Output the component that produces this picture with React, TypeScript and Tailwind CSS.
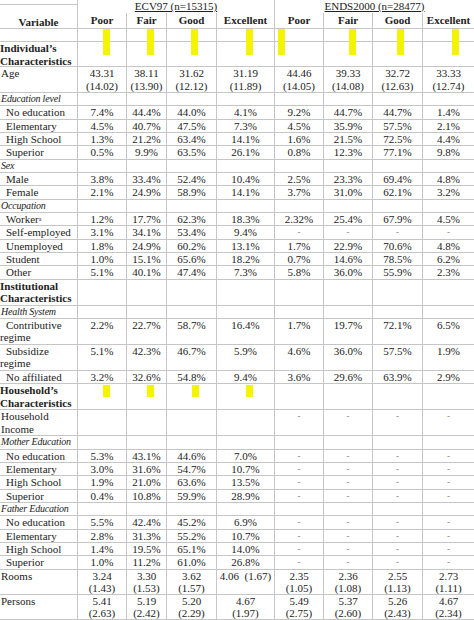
import React from "react";

// column widths: Variable | ECV97 x4 | ENDS2000 x4
const W = [
  "w-[78px]",
  "w-[49px]",
  "w-[40px]",
  "w-[50px]",
  "w-[58px]",
  "w-[49px]",
  "w-[49px]",
  "w-[50px]",
  "w-[51px]",
];

type Kind = "group" | "section" | "item" | "plain";

interface Row {
  label: string;
  kind: Kind;
  h: string;
  cells?: string[];
  sup?: string;
}

const D = ["-", "-", "-", "-"];

const rows: Row[] = [
  { label: "", kind: "plain", h: "h-[13px]" },
  { label: "Individual’s Characteristics", kind: "group", h: "h-[25px]" },
  {
    label: "Age",
    kind: "plain",
    h: "h-[26px]",
    cells: [
      "43.31\n(14.02)",
      "38.11\n(13.90)",
      "31.62\n(12.12)",
      "31.19\n(11.89)",
      "44.46\n(14.05)",
      "39.33\n(14.08)",
      "32.72\n(12.63)",
      "33.33\n(12.74)",
    ],
  },
  { label: "Education level", kind: "section", h: "h-[13.33px]" },
  { label: "No education", kind: "item", h: "h-[13.33px]", cells: ["7.4%", "44.4%", "44.0%", "4.1%", "9.2%", "44.7%", "44.7%", "1.4%"] },
  { label: "Elementary", kind: "item", h: "h-[13.33px]", cells: ["4.5%", "40.7%", "47.5%", "7.3%", "4.5%", "35.9%", "57.5%", "2.1%"] },
  { label: "High School", kind: "item", h: "h-[13.33px]", cells: ["1.3%", "21.2%", "63.4%", "14.1%", "1.6%", "21.5%", "72.5%", "4.4%"] },
  { label: "Superior", kind: "item", h: "h-[13.33px]", cells: ["0.5%", "9.9%", "63.5%", "26.1%", "0.8%", "12.3%", "77.1%", "9.8%"] },
  { label: "Sex", kind: "section", h: "h-[13.33px]" },
  { label: "Male", kind: "item", h: "h-[13.33px]", cells: ["3.8%", "33.4%", "52.4%", "10.4%", "2.5%", "23.3%", "69.4%", "4.8%"] },
  { label: "Female", kind: "item", h: "h-[13.33px]", cells: ["2.1%", "24.9%", "58.9%", "14.1%", "3.7%", "31.0%", "62.1%", "3.2%"] },
  { label: "Occupation", kind: "section", h: "h-[13.33px]" },
  { label: "Worker", sup: "a", kind: "item", h: "h-[13.33px]", cells: ["1.2%", "17.7%", "62.3%", "18.3%", "2.32%", "25.4%", "67.9%", "4.5%"] },
  { label: "Self-employed", kind: "item", h: "h-[13.33px]", cells: ["3.1%", "34.1%", "53.4%", "9.4%", ...D] },
  { label: "Unemployed", kind: "item", h: "h-[13.33px]", cells: ["1.8%", "24.9%", "60.2%", "13.1%", "1.7%", "22.9%", "70.6%", "4.8%"] },
  { label: "Student", kind: "item", h: "h-[13.33px]", cells: ["1.0%", "15.1%", "65.6%", "18.2%", "0.7%", "14.6%", "78.5%", "6.2%"] },
  { label: "Other", kind: "item", h: "h-[13.33px]", cells: ["5.1%", "40.1%", "47.4%", "7.3%", "5.8%", "36.0%", "55.9%", "2.3%"] },
  { label: "Institutional Characteristics", kind: "group", h: "h-[26px]" },
  { label: "Health System", kind: "section", h: "h-[13.33px]" },
  { label: "Contributive regime", kind: "item", h: "h-[26px]", cells: ["2.2%", "22.7%", "58.7%", "16.4%", "1.7%", "19.7%", "72.1%", "6.5%"] },
  { label: "Subsidize regime", kind: "item", h: "h-[26px]", cells: ["5.1%", "42.3%", "46.7%", "5.9%", "4.6%", "36.0%", "57.5%", "1.9%"] },
  { label: "No affiliated", kind: "item", h: "h-[13.33px]", cells: ["3.2%", "32.6%", "54.8%", "9.4%", "3.6%", "29.6%", "63.9%", "2.9%"] },
  { label: "Household’s Characteristics", kind: "group", h: "h-[26px]" },
  { label: "Household Income", kind: "plain", h: "h-[26px]", cells: ["", "", "", "", ...D] },
  { label: "Mother Education", kind: "section", h: "h-[13.33px]" },
  { label: "No education", kind: "item", h: "h-[13.33px]", cells: ["5.3%", "43.1%", "44.6%", "7.0%", ...D] },
  { label: "Elementary", kind: "item", h: "h-[13.33px]", cells: ["3.0%", "31.6%", "54.7%", "10.7%", ...D] },
  { label: "High School", kind: "item", h: "h-[13.33px]", cells: ["1.9%", "21.0%", "63.6%", "13.5%", ...D] },
  { label: "Superior", kind: "item", h: "h-[13.33px]", cells: ["0.4%", "10.8%", "59.9%", "28.9%", ...D] },
  { label: "Father Education", kind: "section", h: "h-[13.33px]" },
  { label: "No education", kind: "item", h: "h-[13.33px]", cells: ["5.5%", "42.4%", "45.2%", "6.9%", ...D] },
  { label: "Elementary", kind: "item", h: "h-[13.33px]", cells: ["2.8%", "31.3%", "55.2%", "10.7%", ...D] },
  { label: "High School", kind: "item", h: "h-[13.33px]", cells: ["1.4%", "19.5%", "65.1%", "14.0%", ...D] },
  { label: "Superior", kind: "item", h: "h-[13.33px]", cells: ["1.0%", "11.2%", "61.0%", "26.8%", ...D] },
  {
    label: "Rooms",
    kind: "plain",
    h: "h-[25px]",
    cells: ["3.24\n(1.43)", "3.30\n(1.53)", "3.62\n(1.57)", "4.06  (1.67)", "2.35\n(1.05)", "2.36\n(1.08)", "2.55\n(1.13)", "2.73\n(1.11)"],
  },
  {
    label: "Persons",
    kind: "plain",
    h: "h-[25px]",
    cells: ["5.41\n(2.63)", "5.19\n(2.42)", "5.20\n(2.29)", "4.67\n(1.97)", "5.49\n(2.75)", "5.37\n(2.60)", "5.26\n(2.43)", "4.67\n(2.34)"],
  },
];

// yellow highlighter marks drawn over the scan
const marks = [
  "left-[103px] top-[29px] h-[26px]",
  "left-[147px] top-[29px] h-[26px]",
  "left-[191px] top-[29px] h-[26px]",
  "left-[246px] top-[29px] h-[26px]",
  "left-[278px] top-[29px] h-[26px]",
  "left-[349px] top-[29px] h-[26px]",
  "left-[397px] top-[29px] h-[26px]",
  "left-[452px] top-[29px] h-[26px]",
  "left-[103px] top-[385px] h-[12px]",
  "left-[147px] top-[385px] h-[12px]",
  "left-[192px] top-[385px] h-[12px]",
  "left-[246px] top-[385px] h-[12px]",
];

function LabelCell({ row }: { row: Row }) {
  const cls =
    row.kind === "group"
      ? "font-bold pl-0"
      : row.kind === "section"
        ? "italic pl-[1px] text-[10px] whitespace-nowrap tracking-[-0.2px]"
        : row.kind === "item"
          ? "pl-0 indent-[6px]"
          : "pl-[1px]";
  return (
    <div className={`${W[0]} shrink-0 border-r border-[#c6c6c6] ${cls}`}>
      {row.label}
      {row.sup && <span className="text-[6px] align-top">{row.sup}</span>}
    </div>
  );
}

export default function App() {
  return (
    <div className="relative w-[474px] h-[620px] overflow-hidden bg-white font-['Liberation_Serif',serif] text-[11px] leading-[12.5px] text-[#222]">
      {/* header */}
      <div className="flex h-[29px] border-b border-[#c6c6c6]">
        <div className={`${W[0]} shrink-0 border-r border-[#c6c6c6] flex flex-col`}>
          <div className="mt-[4px] border-t border-[#c6c6c6]" />
          <div className="mt-[11px] text-center font-bold">Variable</div>
        </div>
        <div className="flex flex-col w-[197px] shrink-0 border-r border-[#c6c6c6]">
          <div className="h-[13px] text-center leading-[13px] underline">ECV97 (n=15315)</div>
          <div className="flex h-[16px] font-bold items-center">
            <div className={`${W[1]} h-full border-r border-[#c6c6c6] flex items-center justify-center`}>Poor</div>
            <div className={`${W[2]} h-full border-r border-[#c6c6c6] flex items-center justify-center`}>Fair</div>
            <div className={`${W[3]} h-full border-r border-[#c6c6c6] flex items-center justify-center`}>Good</div>
            <div className="w-[57px] h-full flex items-center justify-center">Excellent</div>
          </div>
        </div>
        <div className="flex flex-col w-[199px] shrink-0">
          <div className="h-[13px] text-center leading-[13px] underline">ENDS2000 (n=28477)</div>
          <div className="flex h-[16px] font-bold items-center">
            <div className={`${W[5]} h-full border-r border-[#c6c6c6] flex items-center justify-center`}>Poor</div>
            <div className={`${W[6]} h-full border-r border-[#c6c6c6] flex items-center justify-center`}>Fair</div>
            <div className={`${W[7]} h-full border-r border-[#c6c6c6] flex items-center justify-center`}>Good</div>
            <div className={`${W[8]} h-full flex items-center justify-center`}>Excellent</div>
          </div>
        </div>
      </div>

      {/* body */}
      {rows.map((row, i) => (
        <div key={i} className={`flex ${row.h} border-b border-[#c6c6c6]`}>
          <LabelCell row={row} />
          {W.slice(1).map((w, c) => {
            const v = row.cells ? row.cells[c] : "";
            const dash = v === "-";
            return (
              <div
                key={c}
                className={`${w} shrink-0 text-center ${v.includes("  ") ? "whitespace-pre" : "whitespace-pre-line"} ${
                  c < 7 ? "border-r border-[#c6c6c6]" : ""
                } ${dash ? "text-[9px] text-[#777]" : ""}`}
              >
                {v}
              </div>
            );
          })}
        </div>
      ))}

      {marks.map((m) => (
        <span key={m} className={`absolute w-[7px] bg-[#f4f400] ${m}`} />
      ))}
    </div>
  );
}
